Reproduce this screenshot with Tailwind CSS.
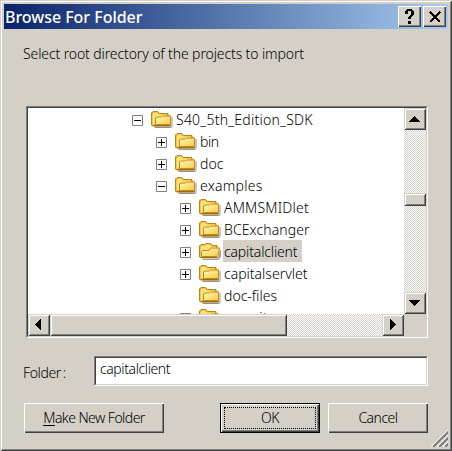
<!DOCTYPE html>
<html lang="en">
<head>
<meta charset="utf-8">
<title>Browse For Folder</title>
<script src="https://cdn.jsdelivr.net/npm/@tailwindcss/browser@4"></script>
</head>
<body class="w-[452px] h-[451px] overflow-hidden bg-[#d4d0c8] font-['Noto_Sans','Open_Sans',sans-serif] text-[14px] font-light leading-[22px] text-black">
<svg class="absolute w-0 h-0" aria-hidden="true">
  <defs>
    <linearGradient id="gold" x1="0" y1="0" x2="1" y2="1"><stop offset="0" stop-color="#fffbb8"/><stop offset="1" stop-color="#f5c745"/></linearGradient>
    <symbol id="closed" viewBox="0 0 22 18">
      <path d="M3 15.500h17.500v-9.500h1v9.500l-1.500 1.500H4z" fill="#777" opacity=".8"/>
      <path d="M.5 14V2L2 .5h4.500l2 2h8.500v2.500h2.500V14l-1 1h-17z" fill="#e8ac28" stroke="#b98418"/>
      <path d="M1.500 3.500L2.500 1.500h3.500l2 2h8v2h-4l-1 1H5L4 8v5.500H1.500z" fill="#ffe27a"/>
      <path d="M4.500 13.500v-6.500l1-1h5l1-1h8v7.500l-1 1z" fill="url(#gold)" stroke="#c28a18"/>
      <path d="M2 14.500h17.500" stroke="#a06c0c"/>
    </symbol>
    <symbol id="open" viewBox="0 0 22 18">
      <path d="M3 15.500h16l2-8.500h1v6.500l-2.500 3.500H4z" fill="#777" opacity=".7"/>
      <path d="M.5 14V3L2 1.500h4l1-1h4.500l2 2h4.500v12h-17z" fill="#e8ac28" stroke="#b98418"/>
      <path d="M1.500 4.500L2.500 2.500h4l1-1h3.500l2 2h4v2h-6l-1.500 1.500H4L3 9v5H1.500z" fill="#ffe27a"/>
      <path d="M2.500 13.500V8.500l1-1h6.500l1.500-2.500h9l-1.500 7.500-1 1z" fill="url(#gold)" stroke="#c28a18"/>
      <path d="M2 14.500h16.500" stroke="#a06c0c"/>
    </symbol>
    <symbol id="plus" viewBox="0 0 11 11"><path d="M.5.5h10v10H.5z" fill="#fff" stroke="#808080"/><path d="M2 5.500h7M5.500 2v7" stroke="#000"/></symbol>
    <symbol id="minus" viewBox="0 0 11 11"><path d="M.5.5h10v10H.5z" fill="#fff" stroke="#808080"/><path d="M2 5.500h7" stroke="#000"/></symbol>
    <pattern id="dither" width="2" height="2" patternUnits="userSpaceOnUse"><path d="M0 0h2v2H0z" fill="#fff"/><path d="M0 0h1v1H0zM1 1h1v1H1z" fill="#d4d0c8"/></pattern>
  </defs>
</svg>
<main class="relative w-[452px] h-[451px] shadow-[inset_1px_1px_#d4d0c8,inset_-1px_-1px_#404040,inset_2px_2px_#fff,inset_-2px_-2px_#808080] pt-1 px-1">
  <header class="w-[444px] h-[25px] bg-linear-to-r/srgb from-[#0a246a] to-[#a6caf0] flex items-center pl-px pr-[2px]">
    <h1 class="flex-1 text-white text-[16px] font-medium whitespace-nowrap leading-[24px] tracking-[-0.03px]">Browse For Folder</h1>
    <button class="w-[23px] h-[21px] mr-[2px] bg-[#d4d0c8] shadow-[inset_1px_1px_#fff,inset_-1px_-1px_#404040,inset_-2px_-2px_#808080] flex justify-center items-center" aria-label="Help">
      <svg width="11" height="16" shape-rendering="crispEdges"><path d="M1 3V2h1V1h1V0h5v1h1v1h1v4H9v1H8v1H7v2H4V8h1V7h1V6h1V2H4v3H1zM4 12h3v3H4z"/></svg>
    </button>
    <button class="w-[23px] h-[21px] bg-[#d4d0c8] shadow-[inset_1px_1px_#fff,inset_-1px_-1px_#404040,inset_-2px_-2px_#808080] flex justify-center items-center" aria-label="Close">
      <svg width="12" height="12"><path d="M1 1l10 10M11 1L1 11" stroke="#000" stroke-width="2.200" shape-rendering="crispEdges"/></svg>
    </button>
  </header>
  <div class="pl-[19px] mt-[14px] h-[63px] whitespace-nowrap tracking-[-0.11px]">Select root directory of the projects to import</div>

  <section class="ml-[22px] w-[402px] h-[232px] border border-t-[#808080] border-l-[#808080] border-b-white border-r-white">
    <div class="w-[400px] h-[230px] border border-t-[#404040] border-l-[#404040] border-b-[#d4d0c8] border-r-[#d4d0c8] grid grid-cols-[376px_22px] grid-rows-[206px_22px]">
    <div class="overflow-hidden bg-white">
      <ul class="whitespace-nowrap leading-[24px]">
        <li class="h-[22px] pl-[104px] flex"><svg class="w-[11px] h-[11px] mt-[7px] shrink-0"><use href="#minus"/></svg><svg class="w-[22px] h-[18px] mt-[3px] ml-2 mr-[2px] shrink-0"><use href="#closed"/></svg><span class="pl-px tracking-[0.24px]">S40_5th_Edition_SDK</span></li>
        <li class="h-[22px] pl-[128px] flex"><svg class="w-[11px] h-[11px] mt-[7px] shrink-0"><use href="#plus"/></svg><svg class="w-[22px] h-[18px] mt-[3px] ml-2 mr-[2px] shrink-0"><use href="#closed"/></svg><span class="pl-px tracking-[-0.4px]">bin</span></li>
        <li class="h-[22px] pl-[128px] flex"><svg class="w-[11px] h-[11px] mt-[7px] shrink-0"><use href="#plus"/></svg><svg class="w-[22px] h-[18px] mt-[3px] ml-2 mr-[2px] shrink-0"><use href="#closed"/></svg><span class="pl-px">doc</span></li>
        <li class="h-[22px] pl-[128px] flex"><svg class="w-[11px] h-[11px] mt-[7px] shrink-0"><use href="#minus"/></svg><svg class="w-[22px] h-[18px] mt-[3px] ml-2 mr-[2px] shrink-0"><use href="#closed"/></svg><span class="pl-px tracking-[0.25px]">examples</span></li>
        <li class="h-[22px] pl-[152px] flex"><svg class="w-[11px] h-[11px] mt-[7px] shrink-0"><use href="#plus"/></svg><svg class="w-[22px] h-[18px] mt-[3px] ml-2 mr-[2px] shrink-0"><use href="#closed"/></svg><span class="pl-px tracking-[0.2px]">AMMSMIDlet</span></li>
        <li class="h-[22px] pl-[152px] flex"><svg class="w-[11px] h-[11px] mt-[7px] shrink-0"><use href="#plus"/></svg><svg class="w-[22px] h-[18px] mt-[3px] ml-2 mr-[2px] shrink-0"><use href="#closed"/></svg><span class="pl-px tracking-[0.1px]">BCExchanger</span></li>
        <li class="h-[22px] pl-[152px] flex"><svg class="w-[11px] h-[11px] mt-[7px] shrink-0"><use href="#plus"/></svg><svg class="w-[22px] h-[18px] mt-[3px] ml-2 mr-[2px] shrink-0"><use href="#open"/></svg><span class="pl-px w-[79px] shrink-0 bg-[#d4d0c8] tracking-[-0.15px]">capitalclient</span></li>
        <li class="h-[22px] pl-[152px] flex"><svg class="w-[11px] h-[11px] mt-[7px] shrink-0"><use href="#plus"/></svg><svg class="w-[22px] h-[18px] mt-[3px] ml-2 mr-[2px] shrink-0"><use href="#closed"/></svg><span class="pl-px">capitalservlet</span></li>
        <li class="h-[22px] pl-[163px] flex"><svg class="w-[22px] h-[18px] mt-[3px] ml-2 mr-[2px] shrink-0"><use href="#closed"/></svg><span class="pl-px">doc-files</span></li>
        <li class="h-[22px] pl-[152px] flex"><svg class="w-[11px] h-[11px] mt-[7px] shrink-0"><use href="#plus"/></svg><svg class="w-[22px] h-[18px] mt-[3px] ml-2 mr-[2px] shrink-0"><use href="#closed"/></svg><span class="pl-px tracking-[0.1px]">security</span></li>
      </ul>
    </div>
    <div class="flex flex-col">
      <div class="h-[22px] bg-[#d4d0c8] shadow-[inset_1px_1px_#d4d0c8,inset_-1px_-1px_#404040,inset_2px_2px_#fff,inset_-2px_-2px_#808080]"><svg width="22" height="22" shape-rendering="crispEdges"><path d="M10 8h1v1h1v1h1v1h1v1h1v1h1v1H5v-1h1v-1h1v-1h1v-1h1V9h1z"/></svg></div>
      <svg class="block w-[22px] h-[63px]" shape-rendering="crispEdges"><rect width="22" height="63" fill="url(#dither)"/></svg>
      <div class="h-[13px] bg-[#d4d0c8] shadow-[inset_1px_1px_#d4d0c8,inset_-1px_-1px_#404040,inset_2px_2px_#fff,inset_-2px_-2px_#808080]"></div>
      <svg class="block w-[22px] h-[86px]" shape-rendering="crispEdges"><rect width="22" height="86" fill="url(#dither)"/></svg>
      <div class="h-[22px] bg-[#d4d0c8] shadow-[inset_1px_1px_#d4d0c8,inset_-1px_-1px_#404040,inset_2px_2px_#fff,inset_-2px_-2px_#808080]"><svg width="22" height="22" shape-rendering="crispEdges"><path d="M5 8h11v1h-1v1h-1v1h-1v1h-1v1h-1v1h-1v-1H9v-1H8v-1H7v-1H6V9H5z"/></svg></div>
    </div>
    <div class="flex">
      <div class="w-[22px] bg-[#d4d0c8] shadow-[inset_1px_1px_#d4d0c8,inset_-1px_-1px_#404040,inset_2px_2px_#fff,inset_-2px_-2px_#808080]"><svg width="22" height="22" shape-rendering="crispEdges"><path d="M13 5v11h-1v-1h-1v-1h-1v-1H9v-1H8v-1H7v-1h1V9h1V8h1V7h1V6h1V5z"/></svg></div>
      <div class="w-[237px] bg-[#d4d0c8] shadow-[inset_1px_1px_#d4d0c8,inset_-1px_-1px_#404040,inset_2px_2px_#fff,inset_-2px_-2px_#808080]"></div>
      <svg class="block w-[95px] h-[22px]" shape-rendering="crispEdges"><rect width="95" height="22" fill="url(#dither)"/></svg>
      <div class="w-[22px] bg-[#d4d0c8] shadow-[inset_1px_1px_#d4d0c8,inset_-1px_-1px_#404040,inset_2px_2px_#fff,inset_-2px_-2px_#808080]"><svg width="22" height="22" shape-rendering="crispEdges"><path d="M8 5h1v1h1v1h1v1h1v1h1v1h1v1h-1v1h-1v1h-1v1h-1v1H9v1H8z"/></svg></div>
    </div>
    <div class="bg-[#d4d0c8]"></div>
    </div>
  </section>

  <div class="flex mt-[18px] pl-[19px] h-[30px] whitespace-nowrap">
    <label class="w-[71px] pt-[6px] tracking-[-0.4px]" for="folder">Folder<span class="pl-[2px]">:</span></label>
    <div class="w-[334px] h-[30px] border border-t-[#808080] border-l-[#808080] border-b-white border-r-white">
      <div id="folder" class="h-full border border-t-[#404040] border-l-[#404040] border-b-[#d4d0c8] border-r-[#d4d0c8] bg-white pl-[4px] leading-[22px] tracking-[-0.4px]">capitalclient</div>
    </div>
  </div>

  <div class="flex mt-[17px] pl-5 whitespace-nowrap leading-[30px] text-center">
    <button class="w-[140px] h-[30px] shadow-[inset_1px_1px_#fff,inset_-1px_-1px_#404040,inset_-2px_-2px_#808080] tracking-[-0.55px]"><span class="underline underline-offset-2">M</span>ake New Folder</button>
    <button class="ml-14 w-[100px] h-[30px] border border-black shadow-[inset_1px_1px_#fff,inset_-1px_-1px_#404040,inset_-2px_-2px_#808080] p-[3px]"><span class="block h-[22px] border border-dotted border-black leading-[20px] tracking-[-0.5px]">OK</span></button>
    <button class="ml-2 w-[100px] h-[30px] shadow-[inset_1px_1px_#fff,inset_-1px_-1px_#404040,inset_-2px_-2px_#808080] tracking-[-0.5px]">Cancel</button>
  </div>
  <svg class="absolute left-[431px] top-[430px]" width="17" height="17" shape-rendering="crispEdges"><path d="M0 17L17 0M6 17L17 6M12 17l5-5" stroke="#fff" stroke-width="1.400"/><path d="M2 17L17 2M8 17l9-9M14 17l3-3" stroke="#808080" stroke-width="2.200"/></svg>
</main>
</body>
</html>
